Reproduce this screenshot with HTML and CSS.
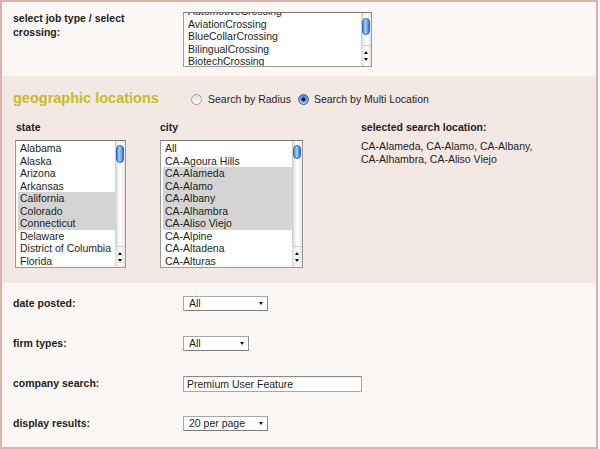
FILE: index.html
```html
<!DOCTYPE html>
<html lang="en">

<head>
    <meta charset="UTF-8">
    <meta name="viewport" content="width=device-width, initial-scale=1.0">
    <title>Job Search</title>
    <link rel="stylesheet" href="styles.css">
</head>

<body>
    <div class="page">
        <!-- job type -->
        <div class="section top">
            <div class="label">select job type / select<br>crossing:</div>
            <div class="listbox job-list">
                <ul class="options">
                    <li>AutomotiveCrossing</li>
                    <li>AviationCrossing</li>
                    <li>BlueCollarCrossing</li>
                    <li>BilingualCrossing</li>
                    <li>BiotechCrossing</li>
                    <li>BusinessCrossing</li>
                </ul>
                <div class="scrollbar">
                    <span class="thumb job-thumb"></span>
                    <span class="arrows"><i class="up"></i><i class="down"></i></span>
                </div>
            </div>
        </div>

        <!-- geographic locations -->
        <div class="section geo">
            <div class="geo-head">
                <h2>geographic locations</h2>
                <label class="radio"><span class="dot"></span>Search by Radius</label>
                <label class="radio checked"><span class="dot"></span>Search by Multi Location</label>
            </div>
            <div class="geo-cols">
                <div class="col state-col">
                    <div class="col-title">state</div>
                    <div class="listbox state-list">
                        <ul class="options">
                            <li>Alabama</li>
                            <li>Alaska</li>
                            <li>Arizona</li>
                            <li>Arkansas</li>
                            <li class="sel">California</li>
                            <li class="sel">Colorado</li>
                            <li class="sel">Connecticut</li>
                            <li>Delaware</li>
                            <li>District of Columbia</li>
                            <li>Florida</li>
                        </ul>
                        <div class="scrollbar">
                            <span class="thumb state-thumb"></span>
                            <span class="arrows"><i class="up"></i><i class="down"></i></span>
                        </div>
                    </div>
                </div>
                <div class="col city-col">
                    <div class="col-title">city</div>
                    <div class="listbox city-list">
                        <ul class="options">
                            <li>All</li>
                            <li>CA-Agoura Hills</li>
                            <li class="sel">CA-Alameda</li>
                            <li class="sel">CA-Alamo</li>
                            <li class="sel">CA-Albany</li>
                            <li class="sel">CA-Alhambra</li>
                            <li class="sel">CA-Aliso Viejo</li>
                            <li>CA-Alpine</li>
                            <li>CA-Altadena</li>
                            <li>CA-Alturas</li>
                        </ul>
                        <div class="scrollbar">
                            <span class="thumb city-thumb"></span>
                            <span class="arrows"><i class="up"></i><i class="down"></i></span>
                        </div>
                    </div>
                </div>
                <div class="col picked-col">
                    <div class="col-title">selected search location:</div>
                    <div class="picked">CA-Alameda, CA-Alamo, CA-Albany,<br>CA-Alhambra, CA-Aliso Viejo</div>
                </div>
            </div>
        </div>

        <!-- other filters -->
        <div class="section bottom">
            <div class="row">
                <div class="label">date posted:</div>
                <div class="select w-wide"><span>All</span><i class="down"></i></div>
            </div>
            <div class="row">
                <div class="label">firm types:</div>
                <div class="select w-small"><span>All</span><i class="down"></i></div>
            </div>
            <div class="row">
                <div class="label">company search:</div>
                <div class="textbox">Premium User Feature</div>
            </div>
            <div class="row">
                <div class="label">display results:</div>
                <div class="select w-wide"><span>20 per page</span><i class="down"></i></div>
            </div>
        </div>
    </div>
</body>

</html>
```

FILE: styles.css
```css
body {
    margin: 0;
    background-color: #fff;
    font-family: "Liberation Sans", Arial, sans-serif;
    font-size: 10.5px;
    color: #1e1e1e;
}

.page {
    width: 598px;
    height: 449px;
    box-sizing: border-box;
    border: 2px solid #dcb2aa;
    display: flex;
    flex-direction: column;
}

.section {
    box-sizing: border-box;
}

.label {
    width: 170px;
    flex-shrink: 0;
    font-weight: bold;
    line-height: 13.5px;
}

/* job type */
.top {
    height: 74px;
    padding: 10px 0 0 11px;
    display: flex;
    background-color: #faf7f5;
}

/* listboxes */
.listbox {
    display: flex;
    box-sizing: border-box;
    background-color: #fff;
    border: 1px solid #9a9a9a;
    border-top-color: #777;
    overflow: hidden;
}

.options {
    flex: 1;
    list-style: none;
    margin: 0;
    padding: 1px 0 0 2px;
    line-height: 12.5px;
    white-space: nowrap;
    overflow: hidden;
}

.options li {
    padding-left: 2px;
}

.options li.sel {
    background-color: #d4d4d4;
}

.job-list {
    width: 189px;
    height: 55px;
}

.job-list .options {
    padding-top: 0;
}

.job-list .options li:first-child {
    margin-top: -8px;
}

.state-list {
    width: 111px;
    height: 128px;
}

.city-list {
    width: 143px;
    height: 128px;
}

.scrollbar {
    width: 10px;
    flex-shrink: 0;
    display: flex;
    flex-direction: column;
    justify-content: space-between;
    background: linear-gradient(to right, #c8c8c8, #ececec 25%, #fff 55%, #e6e6e6);
}

.thumb {
    display: block;
    width: 8px;
    margin: 4px auto 0;
    box-sizing: border-box;
    border: 1px solid #3567b0;
    border-radius: 4px;
    background: linear-gradient(to right, #4a86d8, #a9d0f7 40%, #6ea8ec 70%, #3a74c8);
}

.job-thumb {
    height: 17px;
    margin-top: 5px;
}

.state-thumb {
    height: 18px;
}

.city-thumb {
    height: 14px;
}

.arrows {
    height: 20px;
    display: flex;
    flex-direction: column;
    align-items: center;
    justify-content: space-evenly;
    border-top: 1px solid #d0d0d0;
    background: linear-gradient(to right, #dcdcdc, #f6f6f6 40%, #fff 60%, #e2e2e2);
}

.up,
.down {
    display: block;
    width: 0;
    height: 0;
    border-left: 2px solid transparent;
    border-right: 2px solid transparent;
}

.up {
    border-bottom: 3px solid #111;
}

.down {
    border-top: 3px solid #111;
}

/* geographic locations */
.geo {
    height: 207px;
    padding: 14px 0 0 11px;
    background-color: #f4e8e5;
}

.geo-head {
    display: flex;
    align-items: center;
}

.geo-head h2 {
    width: 178px;
    margin: 0;
    font-size: 14.5px;
    line-height: 17px;
    color: #c3bd2c;
}

.radio {
    display: flex;
    align-items: center;
    line-height: 13px;
    padding-top: 1px;
}

.radio + .radio {
    margin-left: 7px;
}

.dot {
    width: 11px;
    height: 11px;
    margin-right: 6px;
    box-sizing: border-box;
    border-radius: 50%;
    border: 1px solid #9c9c9c;
    background: linear-gradient(#e2e2e2, #fff);
}

.radio.checked .dot {
    margin-right: 5px;
    border-color: #3a63a0;
    background: radial-gradient(circle, #14233f 0, #14233f 1.8px, transparent 2.4px),
        linear-gradient(#4a86d6, #a6d0f6);
}

.geo-cols {
    display: flex;
    margin: 14px 0 0 2px;
}

.col-title {
    font-weight: bold;
    line-height: 13px;
    margin-bottom: 6px;
}

.state-col {
    width: 145px;
}

.state-col .col-title {
    padding-left: 1px;
}

.city-col {
    width: 201px;
}

.picked {
    margin-top: 2px;
    line-height: 13px;
}

/* other filters */
.bottom {
    flex: 1;
    padding: 13px 0 0 11px;
    display: flex;
    flex-direction: column;
    gap: 25px;
    background-color: #faf7f5;
}

.row {
    display: flex;
    align-items: center;
    height: 15px;
}

.row .label {
    width: 170px;
    line-height: 13px;
}

.select {
    height: 15px;
    box-sizing: border-box;
    display: flex;
    align-items: center;
    justify-content: space-between;
    padding: 0 4px 0 5px;
    background-color: #fff;
    border: 1px solid #a8a8a8;
    border-right-color: #8c8c8c;
    border-bottom-color: #7c7c7c;
    line-height: 13px;
}

.select .down {
    border-left-width: 2.5px;
    border-right-width: 2.5px;
}

.w-wide {
    width: 85px;
}

.w-small {
    width: 66px;
}

.textbox {
    width: 179px;
    height: 16px;
    box-sizing: border-box;
    padding-left: 3px;
    background-color: #fff;
    border: 1px solid #a8a8a8;
    border-top-color: #8a8a8a;
    box-shadow: inset 0 1px 1px rgba(0, 0, 0, 0.08);
    line-height: 14px;
}
```
